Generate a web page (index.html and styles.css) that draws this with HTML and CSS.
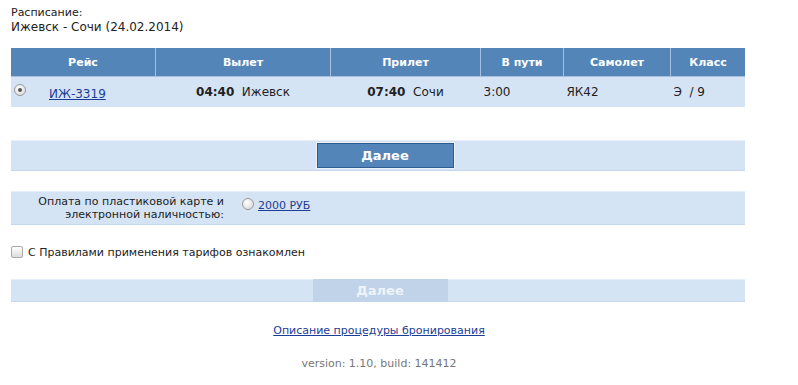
FILE: index.html
```html
<!DOCTYPE html>
<html lang="ru">
<head>
  <meta charset="UTF-8">
  <title>Расписание</title>
  <link rel="stylesheet" href="styles.css">
</head>
<body>
  <div class="page">
    <div class="caption">
      <div class="caption-label">Расписание:</div>
      <div class="caption-route">Ижевск - Сочи (24.02.2014)</div>
    </div>

    <table class="flights">
      <thead>
        <tr>
          <th class="col-flight">Рейс</th>
          <th class="col-dep">Вылет</th>
          <th class="col-arr">Прилет</th>
          <th class="col-time">В пути</th>
          <th class="col-plane">Самолет</th>
          <th class="col-class">Класс</th>
        </tr>
      </thead>
      <tbody>
        <tr>
          <td class="flight-cell"><span class="radio checked"></span><a href="#">ИЖ-3319</a></td>
          <td class="center"><b>04:40</b>&nbsp; Ижевск</td>
          <td class="center"><b>07:40</b>&nbsp; Сочи</td>
          <td class="pad">3:00</td>
          <td class="pad">ЯК42</td>
          <td class="pad">Э &nbsp;/ 9</td>
        </tr>
      </tbody>
    </table>

    <div class="bar bar-next">
      <button class="btn">Далее</button>
    </div>

    <div class="bar bar-pay">
      <div class="pay-label">Оплата по пластиковой карте и<br>электронной наличностью:</div>
      <div class="pay-option"><span class="radio"></span><a href="#">2000 РУБ</a></div>
    </div>

    <label class="rules"><span class="checkbox"></span>С Правилами применения тарифов ознакомлен</label>

    <div class="bar bar-submit">
      <button class="btn btn-disabled" disabled>Далее</button>
    </div>

    <div class="footer">
      <a href="#">Описание процедуры бронирования</a>
      <div class="version">version: 1.10, build: 141412</div>
    </div>
  </div>
</body>
</html>
```

FILE: styles.css
```css
body {
  margin: 0;
  font-family: "DejaVu Sans", Verdana, sans-serif;
  font-size: 11px;
  color: #222;
  background: #fff;
}
.page {
  width: 734px;
  padding: 7px 0 0 11px;
}
a {
  color: #1c3c96;
}
.caption-label {
  font-size: 11px;
  line-height: 12px;
}
.caption-route {
  font-size: 12px;
  line-height: 16px;
}
.flights {
  width: 734px;
  margin-top: 13px;
  border-collapse: collapse;
}
.flights th {
  height: 28px;
  padding: 0;
  background-color: #5485b9;
  color: #fff;
  font-weight: bold;
  border-left: 1px solid #a6c0de;
  border-bottom: 1px solid #a6c0de;
  text-align: center;
}
.flights th:first-child {
  border-left: none;
}
.flights td {
  height: 30px;
  padding: 0;
  background-color: #d5e4f5;
  font-size: 12px;
}
.flights td.center {
  text-align: center;
}
.flights td.pad {
  padding-left: 3px;
}
.col-flight { width: 144px; }
.col-dep { width: 174px; }
.col-arr { width: 149px; }
.col-time { width: 82px; }
.col-plane { width: 106px; }
.flight-cell a {
  margin-left: 23px;
}
.flight-cell .radio {
  margin-left: 3px;
  vertical-align: 2px;
}
.radio {
  display: inline-block;
  width: 10px;
  height: 10px;
  border-radius: 50%;
  border: 1px solid #9a9a9a;
  background: radial-gradient(circle at 40% 35%, #fff, #d4d4d4);
  vertical-align: middle;
  position: relative;
}
.radio.checked::after {
  content: "";
  position: absolute;
  left: 3px;
  top: 3px;
  width: 4px;
  height: 4px;
  border-radius: 50%;
  background: #555;
}
.checkbox {
  display: inline-block;
  width: 10px;
  height: 10px;
  border: 1px solid #aaa;
  border-radius: 2px;
  background: linear-gradient(#fff, #dcdcdc);
  vertical-align: -2px;
  margin-right: 5px;
}
.bar {
  background-color: #d5e4f5;
  border-top: 1px solid #e6eef9;
  border-bottom: 1px solid #c6d7ec;
}
.bar-next {
  margin-top: 33px;
  height: 29px;
  display: flex;
  align-items: center;
  justify-content: center;
}
.btn {
  font-family: inherit;
  font-size: 13px;
  font-weight: bold;
  color: #fff;
  background-color: #5485b9;
  border: 1px solid #2d5c93;
  box-shadow: 0 0 0 1px #eaf1fa;
  width: 137px;
  height: 25px;
  padding: 0;
  margin-left: 14px;
}
.btn-disabled {
  background-color: #c0d3e8;
  border: none;
  box-shadow: none;
  color: #eef3fa;
  height: 23px;
  width: 135px;
  margin-left: 4px;
}
.bar-pay {
  margin-top: 20px;
  height: 32px;
  display: flex;
  align-items: center;
}
.pay-label {
  width: 213px;
  text-align: right;
  line-height: 13px;
  font-size: 11px;
}
.pay-option {
  align-self: flex-start;
  margin-top: 6px;
  margin-left: 18px;
  font-size: 11px;
}
.pay-option .radio {
  margin-right: 4px;
  vertical-align: -1px;
}
.rules {
  display: block;
  margin-top: 21px;
  font-size: 11px;
  line-height: 14px;
}
.bar-submit {
  margin-top: 19px;
  height: 21px;
  display: flex;
  align-items: center;
  justify-content: center;
}
.footer {
  text-align: center;
  font-size: 11px;
  padding-top: 22px;
  margin-left: 2px;
}
.version {
  margin-top: 20px;
  color: #777;
}
```
